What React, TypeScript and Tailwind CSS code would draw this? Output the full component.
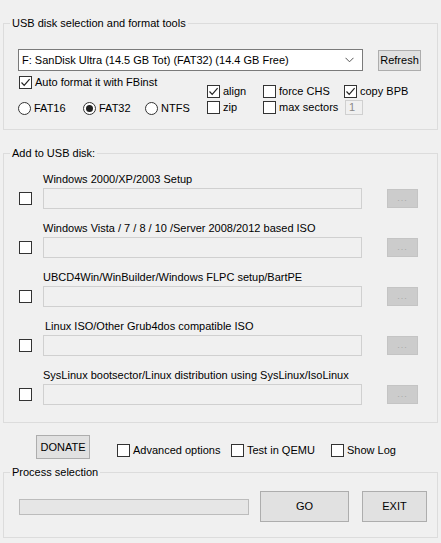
import React from "react";

function Check({ checked = false }: { checked?: boolean }) {
  return (
    <span className="w-[13px] h-[13px] shrink-0 border border-[#333333] bg-white flex items-center justify-center">
      {checked && (
        <svg width="11" height="11" viewBox="0 0 11 11">
          <polyline points="1.5,5.5 4.2,8.3 9.6,2.2" fill="none" stroke="#222" strokeWidth="1.2" />
        </svg>
      )}
    </span>
  );
}

function CheckItem({ label, checked = false, className = "" }: { label: string; checked?: boolean; className?: string }) {
  return (
    <div className={"flex items-center h-[13px] " + className}>
      <Check checked={checked} />
      <span className="ml-[3px] leading-[13px] whitespace-nowrap">{label}</span>
    </div>
  );
}

function Radio({ label, checked = false, className = "" }: { label: string; checked?: boolean; className?: string }) {
  return (
    <div className={"flex items-center h-[13px] " + className}>
      <span className="w-[13px] h-[13px] shrink-0 rounded-full border border-[#333333] bg-white flex items-center justify-center">
        {checked && <span className="w-[7px] h-[7px] rounded-full bg-[#222222]" />}
      </span>
      <span className="ml-[3px] leading-[13px] whitespace-nowrap">{label}</span>
    </div>
  );
}

function IsoRow({ label, labelClass = "" }: { label: string; labelClass?: string }) {
  return (
    <div className="mt-[12px]">
      <div className={"ml-[39px] leading-[14px] h-[14px] whitespace-nowrap " + labelClass}>{label}</div>
      <div className="flex items-center mt-[2px]">
        <span className="ml-[15px]">
          <Check />
        </span>
        <div className="ml-[11px] w-[319px] h-[21px] border border-[#d0d0d0] bg-[#f0f0f0]" />
        <div className="ml-[25px] w-[31px] h-[19px] border border-[#c4c4c4] bg-[#cccccc] flex items-center justify-center text-[#a8a8a8] text-[9px] tracking-[1px] leading-none">
          ...
        </div>
      </div>
    </div>
  );
}

export default function App() {
  return (
    <div className="w-[441px] h-[543px] bg-[#f0f0f0] font-['Liberation_Sans',Arial,sans-serif] text-[11px] text-black pt-[16px] px-[3px] overflow-hidden">
      <fieldset className="border border-[#dcdcdc] pb-[14px]">
        <legend className="ml-[6px] px-[2px] leading-[14px]">USB disk selection and format tools</legend>
        <div className="flex items-center mt-[19px]">
          <div className="ml-[14px] w-[345px] h-[22px] border border-[#7a7a7a] bg-white flex items-center pl-[3px] pr-[8px]">
            <span className="flex-1 whitespace-nowrap">F: SanDisk Ultra (14.5 GB Tot) (FAT32) (14.4 GB Free)</span>
            <svg width="9" height="6" viewBox="0 0 9 6">
              <polyline points="0.5,0.8 4.5,4.8 8.5,0.8" fill="none" stroke="#555" strokeWidth="1" />
            </svg>
          </div>
          <div className="ml-[15px] w-[43px] h-[21px] border border-[#adadad] bg-[#e1e1e1] flex items-center justify-center">
            Refresh
          </div>
        </div>
        <div className="flex items-start mt-[5px]">
          <div className="ml-[15px] w-[188px]">
            <CheckItem label="Auto format it with FBinst" checked />
            <div className="flex mt-[13px] -ml-[1px]">
              <Radio label="FAT16" className="w-[65px]" />
              <Radio label="FAT32" checked className="w-[62px]" />
              <Radio label="NTFS" />
            </div>
          </div>
          <div className="w-[56px] mt-[9px] flex flex-col gap-[3px]">
            <CheckItem label="align" checked />
            <CheckItem label="zip" />
          </div>
          <div className="w-[81px] mt-[9px] flex flex-col gap-[3px]">
            <CheckItem label="force CHS" />
            <CheckItem label="max sectors" />
          </div>
          <div className="mt-[9px] flex flex-col">
            <CheckItem label="copy BPB" checked />
            <div className="mt-[2px] ml-[1px] w-[18px] h-[15px] border border-[#d0d0d0] bg-[#f0f0f0] text-[#8a8a8a] leading-[13px] pl-[3px]">
              1
            </div>
          </div>
        </div>
      </fieldset>

      <fieldset className="border border-[#dcdcdc] mt-[16px] pb-[17px]">
        <legend className="ml-[6px] px-[2px] leading-[14px]">Add to USB disk:</legend>
        <IsoRow label="Windows 2000/XP/2003 Setup" />
        <IsoRow label="Windows Vista / 7 / 8 / 10 /Server 2008/2012 based ISO" />
        <IsoRow label="UBCD4Win/WinBuilder/Windows FLPC setup/BartPE" />
        <IsoRow label="Linux ISO/Other Grub4dos compatible ISO" labelClass="pl-[2px]" />
        <IsoRow label="SysLinux bootsector/Linux distribution using SysLinux/IsoLinux" />
      </fieldset>

      <div className="flex items-start mt-[12px]">
        <div className="ml-[33px] w-[54px] h-[24px] border border-[#adadad] bg-[#e1e1e1] flex items-center justify-center">
          DONATE
        </div>
        <div className="flex mt-[9px] ml-[27px]">
          <CheckItem label="Advanced options" className="w-[114px]" />
          <CheckItem label="Test in QEMU" className="w-[100px]" />
          <CheckItem label="Show Log" />
        </div>
      </div>

      <fieldset className="border border-[#dcdcdc] mt-[6px] pb-[15px]">
        <legend className="ml-[6px] px-[2px] leading-[14px]">Process selection</legend>
        <div className="flex items-center mt-[12px]">
          <div className="ml-[15px] w-[230px] h-[16px] border border-[#bcbcbc] bg-[#e6e6e6]" />
          <div className="ml-[11px] w-[89px] h-[31px] border border-[#adadad] bg-[#e1e1e1] flex items-center justify-center">
            GO
          </div>
          <div className="ml-[13px] w-[65px] h-[31px] border border-[#adadad] bg-[#e1e1e1] flex items-center justify-center">
            EXIT
          </div>
        </div>
      </fieldset>
    </div>
  );
}
